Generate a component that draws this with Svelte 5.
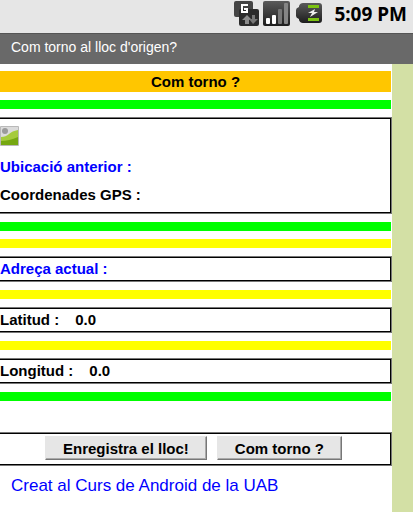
<script lang="ts">
  let latitude = $state("0.0");
  let longitude = $state("0.0");
  let time = "5:09 PM";
</script>

<div class="phone">
  <header class="status-bar">
    <svg class="status-icon" width="27" height="27" viewBox="0 0 27 27" aria-hidden="true">
      <defs>
        <linearGradient id="tile" x1="0" y1="0" x2="0" y2="1">
          <stop offset="0" stop-color="#5a5a5a" />
          <stop offset="1" stop-color="#1d1d1d" />
        </linearGradient>
      </defs>
      <rect x="1" y="1" width="19" height="16" rx="2" fill="#444" />
      <rect x="6" y="9" width="20" height="17" rx="2" fill="#2b2b2b" />
      <path d="M15 5H9v7h5V9h-3" fill="none" stroke="#fff" stroke-width="2" />
      <path d="M12 24v-4h-3l5-5 5 5h-3v4z" fill="#8c8c8c" />
      <path d="M19 15h3v4h3l-5 5-4-5h3z" fill="#777" />
    </svg>
    <svg class="status-icon" width="28" height="27" viewBox="0 0 28 27" aria-hidden="true">
      <rect x="0" y="1" width="27" height="25" rx="2" fill="url(#tile)" />
      <rect x="3" y="18" width="4" height="6" rx="1" fill="#fff" />
      <rect x="9" y="15" width="4" height="9" rx="1" fill="#fff" />
      <rect x="15" y="9" width="4" height="15" rx="1" fill="#777" />
      <rect x="21" y="3" width="4" height="21" rx="1" fill="#858585" />
    </svg>
    <svg class="battery" width="26" height="20" viewBox="0 0 26 20" aria-hidden="true">
      <path d="M7 0h16q3 0 3 3v14q0 3-3 3H7q-3 0-4-3v-1q-3-1-3-3V7q0-2 3-3V3q1-3 4-3z" fill="url(#tile)" />
      <path d="M12 2h11v3H12zM12 15h11v3H12z" fill="#7cc312" />
      <path d="M19 6l-7 4h4l-2 4 8-5h-4z" fill="#eee" />
    </svg>
    <span class="clock">{time}</span>
  </header>

  <h1 class="title-bar">Com torno al lloc d'origen?</h1>

  <div class="page">
    <main class="content">
      <h2 class="banner">Com torno ?</h2>

      <div class="stripe green"></div>

      <section class="box previous">
        <svg class="picture" width="20" height="20" viewBox="0 0 20 20" role="img" aria-label="Foto">
          <rect x="0" y="0" width="19" height="20" rx="1" fill="#b9b9b9" />
          <rect x="1" y="1" width="17" height="18" fill="#dcdcdc" />
          <circle cx="5" cy="5" r="3" fill="#9b9b9b" />
          <path d="M1 11q5 0 8-3t9-4v15H1z" fill="#a5cb3c" />
          <path d="M1 15q8 0 17-4v8H1z" fill="#76a811" />
        </svg>
        <p class="blue">Ubicació anterior :</p>
        <p>Coordenades GPS :</p>
      </section>

      <div class="stripe green"></div>
      <div class="stripe yellow"></div>

      <section class="box row blue">Adreça actual :</section>

      <div class="stripe yellow"></div>

      <section class="box row">
        <span>Latitud :</span>
        <span>{latitude}</span>
      </section>

      <div class="stripe yellow"></div>

      <section class="box row">
        <span>Longitud :</span>
        <span>{longitude}</span>
      </section>

      <div class="stripe green"></div>

      <div class="box actions">
        <button type="button">Enregistra el lloc!</button>
        <button type="button">Com torno ?</button>
      </div>

      <p class="credit">Creat al Curs de Android de la UAB</p>
    </main>
    <div class="side"></div>
  </div>
</div>

<style>
  :global(body) {
    margin: 0;
    background: #fff;
  }

  .phone {
    display: flex;
    flex-direction: column;
    min-height: 100vh;
    font-family: "Liberation Sans", Arial, sans-serif;
    font-size: 15px;
    color: #000;
  }

  h1,
  h2,
  p {
    margin: 0;
  }

  .status-bar {
    display: flex;
    justify-content: flex-end;
    align-items: flex-start;
    height: 33px;
    padding-right: 6px;
    background: #e6e6e6;
  }

  .status-icon {
    margin-right: 3px;
  }

  .battery {
    margin: 3px 12px 0 2px;
  }

  .clock {
    font-family: "Noto Sans", "Open Sans", sans-serif;
    font-size: 19px;
    font-weight: 700;
    line-height: 28px;
  }

  .title-bar {
    padding: 0 0 4px 11px;
    border-top: 1px solid #555;
    background: #696969;
    color: #fff;
    font-size: 14px;
    font-weight: 400;
    line-height: 26px;
  }

  .page {
    flex: 1;
    display: flex;
  }

  .content {
    flex: 1;
    display: flex;
    flex-direction: column;
    gap: 8px;
    padding: 7px 1px 0 0;
    background: #fff;
  }

  .side {
    width: 21px;
    background: #d3e0a5;
  }

  .banner {
    background: #ffc600;
    font-size: 15px;
    line-height: 21px;
    text-align: center;
  }

  .stripe {
    height: 9px;
  }

  .green {
    background: #0f0;
  }

  .yellow {
    background: #ff0;
  }

  .box {
    margin-right: -1px;
    border: 1px solid #777;
    border-left: 0;
    box-shadow: inset 0 1px #000, inset 0 -1px #000, inset -1px 0 #000;
    font-weight: 700;
  }

  .previous {
    padding: 8px 0 4px;
    line-height: 28px;
  }

  .picture {
    display: block;
    margin-bottom: 7px;
  }

  .row {
    display: flex;
    gap: 16px;
    line-height: 24px;
  }

  .blue {
    color: #00f;
  }

  .actions {
    display: flex;
    justify-content: center;
    gap: 10px;
    margin-top: 23px;
    padding: 3px 4px 5px 0;
  }

  button {
    height: 24px;
    padding: 0 17px;
    border: 1px solid;
    border-color: #e6e6e6 #777 #777 #e6e6e6;
    border-radius: 0;
    box-shadow: inset -1px -1px #aaa;
    background: #e6e6e6;
    color: #000;
    font: bold 15px "Liberation Sans", Arial, sans-serif;
  }

  .credit {
    padding-left: 11px;
    color: #00f;
    font-size: 17px;
    line-height: 24px;
  }
</style>
